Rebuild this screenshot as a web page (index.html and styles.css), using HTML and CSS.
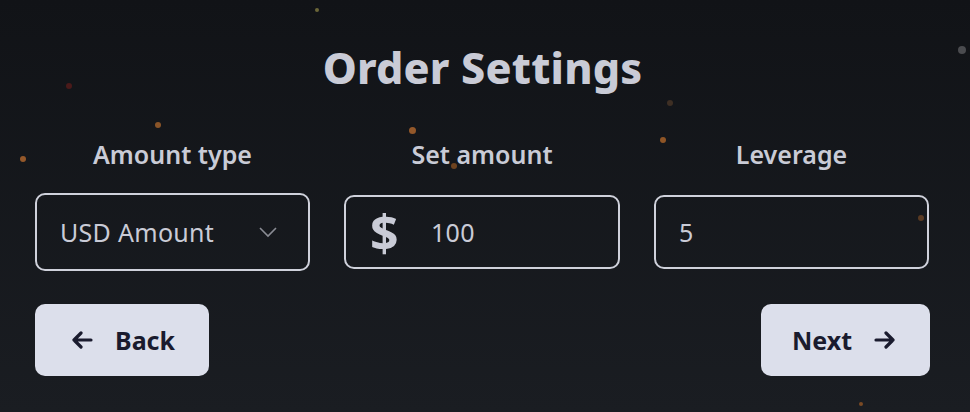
FILE: index.html
```html
<!DOCTYPE html>
<html lang="en">
<head>
  <meta charset="UTF-8">
  <meta name="viewport" content="width=device-width, initial-scale=1.0">
  <title>Order Settings</title>
  <link rel="stylesheet" href="styles.css">
</head>
<body>
  <div class="particles">
    <span class="dot" style="left:315px;top:8px;width:4px;height:4px;background:#6b6638"></span>
    <span class="dot" style="left:66px;top:83px;width:6px;height:6px;background:#4a1a1a"></span>
    <span class="dot" style="left:155px;top:122px;width:6px;height:6px;background:#8a5428"></span>
    <span class="dot" style="left:20px;top:156px;width:6px;height:6px;background:#94582a"></span>
    <span class="dot" style="left:409px;top:127px;width:7px;height:7px;background:#94582a"></span>
    <span class="dot" style="left:451px;top:163px;width:6px;height:6px;background:#6e4320"></span>
    <span class="dot" style="left:667px;top:100px;width:6px;height:6px;background:#3e2f24"></span>
    <span class="dot" style="left:660px;top:137px;width:6px;height:6px;background:#8f5526"></span>
    <span class="dot" style="left:958px;top:46px;width:8px;height:8px;background:#4a4b4f"></span>
    <span class="dot" style="left:918px;top:215px;width:6px;height:6px;background:#5a3a22"></span>
    <span class="dot" style="left:859px;top:402px;width:4px;height:4px;background:#7a4a24"></span>
  </div>

  <div class="container">
    <h1 class="title">Order Settings</h1>

    <div class="fields">
      <div class="field">
        <label class="field-label">Amount type</label>
        <div class="box box-select">
          <span class="value">USD Amount</span>
          <svg class="chevron" width="20" height="12" viewBox="0 0 20 12">
            <path d="M2 2 L10 10 L18 2" fill="none" stroke="#8a8c94" stroke-width="1.6"/>
          </svg>
        </div>
      </div>

      <div class="field">
        <label class="field-label">Set amount</label>
        <div class="box">
          <span class="currency">$</span>
          <span class="value">100</span>
        </div>
      </div>

      <div class="field">
        <label class="field-label">Leverage</label>
        <div class="box">
          <span class="value">5</span>
        </div>
      </div>
    </div>

    <div class="actions">
      <button class="btn btn-back">
        <svg width="22" height="18" viewBox="0 0 22 18">
          <path d="M20 9 H3 M10 2 L3 9 L10 16" fill="none" stroke="#1a1b2e" stroke-width="3.2" stroke-linecap="round" stroke-linejoin="round"/>
        </svg>
        Back
      </button>
      <button class="btn btn-next">
        Next
        <svg width="22" height="18" viewBox="0 0 22 18">
          <path d="M2 9 H19 M12 2 L19 9 L12 16" fill="none" stroke="#1a1b2e" stroke-width="3.2" stroke-linecap="round" stroke-linejoin="round"/>
        </svg>
      </button>
    </div>
  </div>
</body>
</html>
```

FILE: styles.css
```css
body {
  margin: 0;
  height: 412px;
  overflow: hidden;
  background: linear-gradient(180deg, #111317 0%, #1a1d22 100%);
  font-family: "Noto Sans", "Open Sans", sans-serif;
  color: #c9cbd6;
  position: relative;
}
.particles {
  position: absolute;
  inset: 0;
  pointer-events: none;
}
.dot {
  position: absolute;
  border-radius: 50%;
}
.container {
  position: relative;
  width: 895px;
  margin-left: 35px;
  padding-top: 38px;
}
.title {
  margin: 0;
  text-align: center;
  font-size: 43px;
  font-weight: 800;
  line-height: 60px;
  color: #c9cbd6;
  letter-spacing: 0.2px;
}
.fields {
  display: grid;
  grid-template-columns: 275px 276px 275px;
  column-gap: 34px;
  margin-top: 41px;
}
.field {
  display: flex;
  flex-direction: column;
  align-items: center;
}
.field-label {
  font-size: 25px;
  font-weight: 600;
  line-height: 30px;
  margin-bottom: 26px;
}
.box {
  box-sizing: border-box;
  width: 100%;
  height: 74px;
  border: 2px solid #cfd1db;
  border-radius: 10px;
  display: flex;
  align-items: center;
  padding: 0 23px;
}
.box-select {
  height: 78px;
  margin-top: -2px;
  justify-content: space-between;
  padding-right: 30px;
}
.value {
  font-size: 25px;
  color: #c9cbd6;
  letter-spacing: 0.3px;
}
.currency {
  font-size: 50px;
  font-weight: 700;
  width: 61px;
  line-height: 1;
  margin-left: 1px;
}
.actions {
  display: flex;
  justify-content: space-between;
  margin-top: 33px;
}
.btn {
  height: 72px;
  display: flex;
  align-items: center;
  gap: 22px;
  background: #dcdfeb;
  color: #1a1b2e;
  border: none;
  border-radius: 10px;
  font-family: inherit;
  font-size: 25px;
  font-weight: 700;
  cursor: pointer;
}
.btn-back {
  width: 174px;
  padding: 0 0 0 36px;
}
.btn-next {
  width: 169px;
  padding: 0 0 0 31px;
}
```
